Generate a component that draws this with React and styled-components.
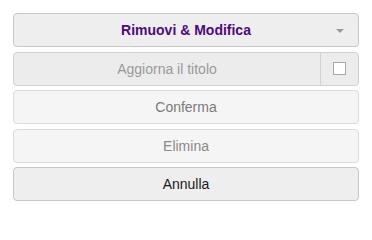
import styled, { createGlobalStyle } from "styled-components";

const GlobalStyle = createGlobalStyle`
  body {
    margin: 0;
    background: #fff;
    font-family: "Liberation Sans", Arial, sans-serif;
  }
`;

const Panel = styled.div`
  width: 346px;
  padding: 13px;
  display: flex;
  flex-direction: column;
  gap: 4.5px;
`;

const Button = styled.button`
  box-sizing: border-box;
  height: 34px;
  width: 100%;
  border: 1px solid ${(p) => (p.$muted ? "#dcdcdc" : "#c8c8c8")};
  border-radius: 4px;
  background: ${(p) => (p.$muted ? "#f5f5f5" : "#eeeeee")};
  color: ${(p) => p.$color || "#222"};
  font-family: inherit;
  font-size: 14px;
  font-weight: ${(p) => (p.$bold ? 700 : 400)};
  display: flex;
  align-items: center;
  justify-content: center;
  position: relative;
  padding: 0 12px;
  cursor: pointer;
`;

const Caret = styled.span`
  position: absolute;
  right: 14px;
  top: 15px;
  width: 0;
  height: 0;
  border-left: 4px solid transparent;
  border-right: 4px solid transparent;
  border-top: 4px solid #9a9a9a;
`;

const Group = styled.div`
  box-sizing: border-box;
  height: 34px;
  display: flex;
  border: 1px solid #d2d2d2;
  border-radius: 4px;
  background: #ececec;
  overflow: hidden;
`;

const GroupMain = styled.div`
  flex: 1;
  display: flex;
  align-items: center;
  justify-content: center;
  color: #9a9a9a;
  font-size: 14px;
`;

const Addon = styled.div`
  width: 37px;
  border-left: 1px solid #d2d2d2;
  display: flex;
  align-items: center;
  justify-content: center;
`;

const Check = styled.span`
  box-sizing: border-box;
  width: 13px;
  height: 13px;
  background: #fff;
  border: 1px solid #a8a8a8;
`;

export default function App() {
  return (
    <>
      <GlobalStyle />
      <Panel>
        <Button $bold $color="#4e0a80">
          Rimuovi &amp; Modifica
          <Caret />
        </Button>
        <Group>
          <GroupMain>Aggiorna il titolo</GroupMain>
          <Addon>
            <Check />
          </Addon>
        </Group>
        <Button $muted $color="#7a7a7a">Conferma</Button>
        <Button $muted $color="#8a8a8a">Elimina</Button>
        <Button $color="#1a1a1a">Annulla</Button>
      </Panel>
    </>
  );
}
